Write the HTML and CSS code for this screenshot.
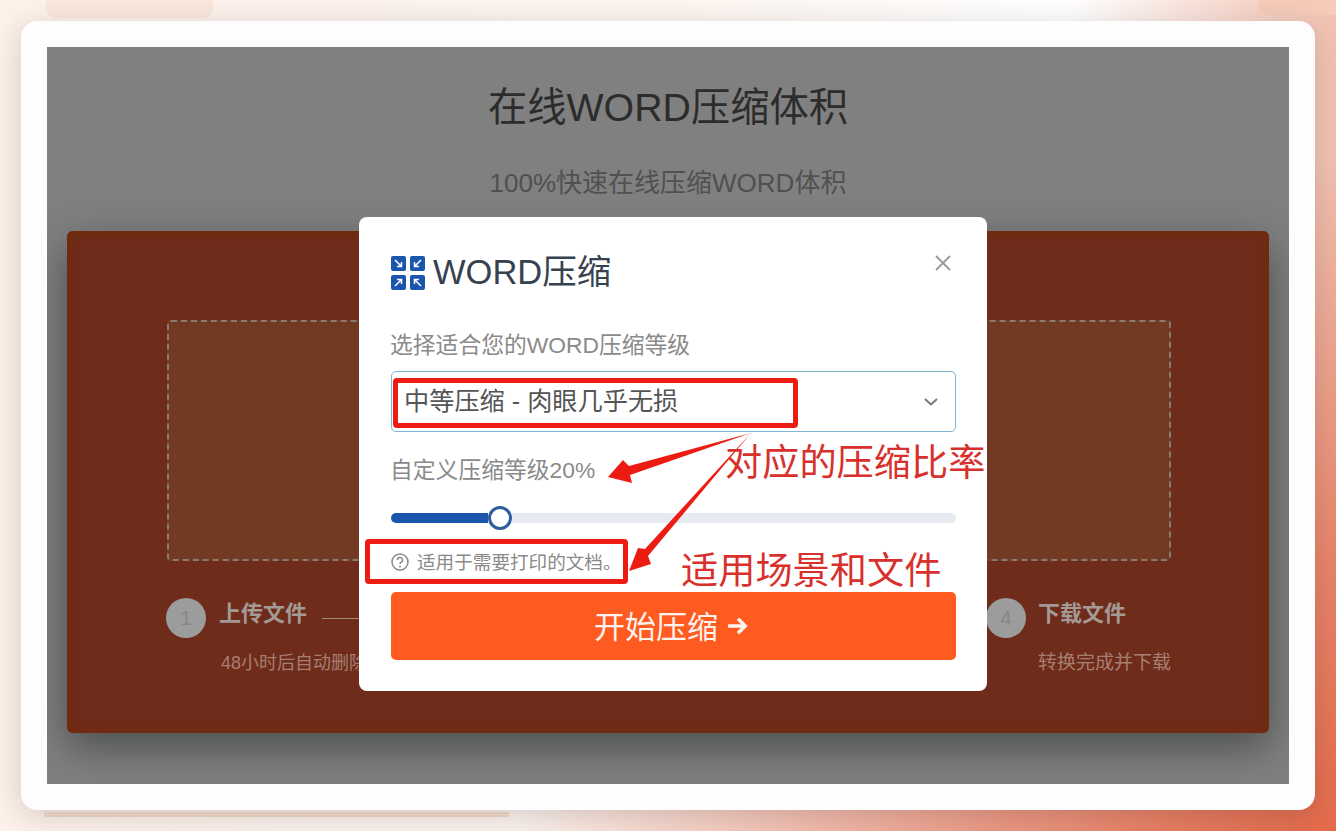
FILE: index.html
```html
<!DOCTYPE html>
<html lang="zh-CN">
<head>
<meta charset="utf-8">
<title>WORD压缩</title>
<link rel="stylesheet" href="styles.css">
</head>
<body>
<div class="deco deco-tl"></div>
<div class="deco deco-tr"></div>
<div class="deco deco-bl"></div>
<main class="card">
  <section class="page">
    <h1 class="page-title">在线WORD压缩体积</h1>
    <p class="page-sub">100%快速在线压缩WORD体积</p>
    <div class="panel">
      <div class="drop"></div>
      <div class="steps">
        <div class="step">
          <div class="step-head">
            <span class="step-num">1</span>
            <strong class="step-name">上传文件</strong>
            <span class="step-line"></span>
          </div>
          <p class="step-desc step-desc-first">48小时后自动删除</p>
        </div>
        <div class="step">
          <div class="step-head">
            <span class="step-num">4</span>
            <strong class="step-name step-name-last">下载文件</strong>
          </div>
          <p class="step-desc">转换完成并下载</p>
        </div>
      </div>
    </div>
  </section>

  <div class="modal">
    <header class="modal-head">
      <svg class="logo" viewBox="0 0 34 34" width="34" height="34" aria-hidden="true">
        <g fill="#1b56ad">
          <rect x="0" y="0" width="15" height="15" rx="2"/>
          <rect x="19" y="0" width="15" height="15" rx="2"/>
          <rect x="0" y="19" width="15" height="15" rx="2"/>
          <rect x="19" y="19" width="15" height="15" rx="2"/>
        </g>
        <g fill="none" stroke="#fff" stroke-width="1.5">
          <path d="M4 4l6.500 6.500M10.500 6v4.500H6"/>
          <path d="M30 4l-6.500 6.500M23.500 6v4.500H28"/>
          <path d="M4 30l6.500-6.500M6 23.500h4.500V28"/>
          <path d="M30 30l-6.500-6.500M28 23.500h-4.500V28"/>
        </g>
      </svg>
      <h2 class="modal-title">WORD压缩</h2>
    </header>
    <svg class="close" viewBox="0 0 16 16" width="16" height="16" aria-hidden="true">
      <path d="M1 1l14 14M15 1L1 15" stroke="#9a9a9a" stroke-width="1.8" fill="none"/>
    </svg>

    <label class="field-label">选择适合您的WORD压缩等级</label>
    <div class="select">
      <span class="select-value">中等压缩 - 肉眼几乎无损</span>
      <svg viewBox="0 0 14 8" width="14" height="8" aria-hidden="true">
        <path d="M1 1l6 5.500L13 1" stroke="#777" stroke-width="2" fill="none"/>
      </svg>
    </div>

    <label class="field-label level-label">自定义压缩等级20%</label>
    <div class="slider">
      <div class="slider-fill"></div>
      <div class="slider-thumb"></div>
      <div class="slider-rest"></div>
    </div>

    <p class="hint">
      <svg viewBox="0 0 18 18" width="18" height="18" aria-hidden="true">
        <circle cx="9" cy="9" r="8" fill="none" stroke="#8a8a8a" stroke-width="1.500"/>
        <path d="M6.500 7a2.500 2.500 0 1 1 3.700 2.200c-.8.500-1.200 1-1.200 1.800" fill="none" stroke="#8a8a8a" stroke-width="1.500"/>
        <circle cx="9" cy="13.500" r="1" fill="#8a8a8a"/>
      </svg>
      <span class="hint-text">适用于需要打印的文档。</span>
    </p>

    <button class="start" type="button">
      <span class="start-text">开始压缩</span>
      <svg viewBox="0 0 20 18" width="22" height="20" aria-hidden="true">
        <path d="M1 9h15M10 2.500l6.500 6.500-6.500 6.500" stroke="#fdf3ec" stroke-width="3.200" fill="none"/>
      </svg>
    </button>

    <div class="mark mark-select"></div>
    <div class="mark mark-hint"></div>
    <svg class="arrows" viewBox="359 217 628 474" aria-hidden="true">
      <polygon fill="#ec1c13" points="751,433 629,466 623,460 608,477 632,483 630,475"/>
      <polygon fill="#ec1c13" points="751,433 645,549 638,548 629,571 651,564 648,556"/>
    </svg>
    <span class="note note-ratio">对应的压缩比率</span>
    <span class="note note-scene">适用场景和文件</span>
  </div>
</main>
</body>
</html>
```

FILE: styles.css
```css
* { box-sizing: border-box; }

html, body { height: 100%; }

body {
  margin: 0;
  padding: 21px;
  overflow: hidden;
  position: relative;
  font-family: "Liberation Sans", "Noto Sans CJK SC", sans-serif;
  background:
    radial-gradient(ellipse 820px 680px at 100% 100%, #e56b4b 0%, rgba(229,107,75,.7) 40%, rgba(229,107,75,0) 100%),
    linear-gradient(to right, #fef1e9 0%, #fdf5f0 50%, #fff 80%, #f3c2b1 100%);
}

.deco { position: absolute; }
.deco-tl { left: 46px; top: 0; width: 167px; height: 18px; background: #fae8dc; border-radius: 0 0 10px 10px; }
.deco-tr { right: 0; top: 0; width: 78px; height: 15px; background: #f6cbb9; border-radius: 0 0 0 10px; }
.deco-bl { left: 44px; top: 812px; width: 465px; height: 5px; background: #f6dccb; }

.card {
  position: relative;
  width: 1294px;
  height: 789px;
  padding: 26px;
  background: #fdfdfd;
  border-radius: 16px;
  box-shadow: 0 6px 30px rgba(40, 40, 50, .2);
}

.page {
  position: relative;
  height: 737px;
  padding: 0 20px;
  background: #808080;
  overflow: hidden;
  text-align: center;
}

.page-title {
  margin: 0;
  padding-top: 36px;
  font-size: 39.300px;
  line-height: 48px;
  font-weight: 400;
  color: #2c2c2c;
}

.page-sub {
  margin: 36px 0 0;
  font-size: 26px;
  line-height: 32px;
  color: #505050;
}

.panel {
  margin-top: 32px;
  height: 502px;
  padding: 89px 98px 0 100px;
  background: #6f2c1a;
  border-radius: 6px;
  box-shadow: inset 0 0 8px 3px #702a0c, 0 14px 40px rgba(20, 30, 25, .5);
}

.drop {
  height: 241px;
  background: #723a22;
  border: 2px dashed #8b7a70;
  border-radius: 4px;
}

.steps {
  display: flex;
  justify-content: space-between;
  margin: 37px 0 0 -1px;
  text-align: left;
}

.step-head { display: flex; align-items: center; height: 40px; }

.step-num {
  flex: none;
  width: 40px;
  height: 40px;
  border-radius: 50%;
  background: #9c9c9c;
  color: #858585;
  font-size: 20px;
  line-height: 40px;
  text-align: center;
}

.step-name {
  margin: -8px 0 0 13px;
  font-size: 22px;
  line-height: 32px;
  color: #a39a96;
}

.step-name-last { margin-left: 12px; margin-right: 2px; }

.step-line {
  width: 60px;
  height: 1px;
  margin-left: 15px;
  background: #a08a80;
}

.step-desc {
  margin: 11px 0 0 52px;
  font-size: 19px;
  line-height: 28px;
  color: #a67f72;
}

.step-desc-first { margin-left: 55px; font-size: 18px; }

.modal {
  position: absolute;
  left: 338px;
  top: 196px;
  width: 628px;
  height: 474px;
  padding: 30px 31px 31px 31px;
  background: #fff;
  border-radius: 8px;
}

.modal-head { display: flex; align-items: center; height: 48px; }

.logo { flex: none; margin: 4px 0 0 1px; }

.modal-title {
  margin: 2px 0 0 8px;
  font-size: 34.500px;
  line-height: 48px;
  font-weight: 400;
  color: #36424f;
}

.close { position: absolute; left: 576px; top: 38px; }

.field-label {
  display: block;
  margin-top: 34px;
  font-size: 22.800px;
  line-height: 32px;
  color: #8a8a8a;
}

.select {
  display: flex;
  align-items: center;
  justify-content: space-between;
  height: 61px;
  margin: 10px 0 0 1px;
  padding: 0 17px 0 12px;
  border: 1px solid #7db8d4;
  border-radius: 5px;
  font-size: 25.200px;
  color: #555;
}

.select-value { margin-bottom: 6px; }

.level-label { margin-top: 22px; }

.slider {
  display: flex;
  align-items: center;
  height: 24px;
  margin: 20px 0 0 1px;
}

.slider-fill { width: 97px; height: 10px; background: #1b56ad; border-radius: 5px 0 0 5px; }

.slider-thumb {
  flex: none;
  width: 24px;
  height: 24px;
  border: 3px solid #2f5f9f;
  border-radius: 50%;
  background: #fff;
}

.slider-rest { flex: 1; height: 10px; background: #e8eaf1; border-radius: 0 5px 5px 0; }

.hint {
  display: flex;
  align-items: center;
  gap: 8px;
  height: 24px;
  margin: 20px 0 0 1px;
  font-size: 18.600px;
  color: #8a8a8a;
}

.hint-text { margin-bottom: 4px; }

.start {
  display: flex;
  align-items: center;
  justify-content: center;
  gap: 9px;
  width: 565px;
  height: 68px;
  margin: 18px 0 0 1px;
  padding: 0 4px 0 0;
  border: 0;
  border-radius: 5px;
  background: #ff5a1f;
  color: #fdf3ec;
  font-family: inherit;
  font-size: 31px;
}

.start-text { margin-bottom: 4px; }

.mark { position: absolute; border: 5px solid #ec1c13; border-radius: 4px; }
.mark-select { left: 34px; top: 161px; width: 405px; height: 50px; }
.mark-hint { left: 6px; top: 322px; width: 263px; height: 45px; }

.arrows { position: absolute; left: 0; top: 0; width: 628px; height: 474px; overflow: visible; }

.note {
  position: absolute;
  font-size: 37.200px;
  line-height: 44px;
  color: #d8302c;
  white-space: nowrap;
}

.note-ratio { left: 366px; top: 224px; }
.note-scene { left: 322px; top: 332px; }
```
